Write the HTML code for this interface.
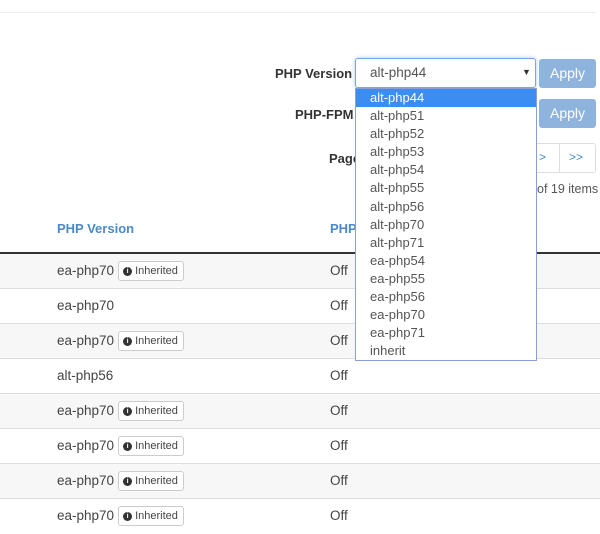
<!DOCTYPE html>
<html><head><meta charset="utf-8"><style>
*{margin:0;padding:0;box-sizing:border-box}
body{width:600px;height:531px;overflow:hidden;background:#fff;font-family:"Liberation Sans",sans-serif;color:#444;position:relative;font-size:13.5px}
.a{position:absolute;white-space:nowrap}
.lbl{font-weight:bold;font-size:13px;color:#333}
.btn{position:absolute;background:#8eb4de;color:#fff;border-radius:3px;font-size:14px;text-align:center;line-height:29px;width:57px;height:29px;left:539px}
.row{position:absolute;left:0;width:600px;height:35px;border-bottom:1px solid #ddd}
.sh{background:#f7f7f7}
.cell{position:absolute;top:0;left:57px;height:34px;display:flex;align-items:center;line-height:16px}
.off{position:absolute;top:9px;left:330px;line-height:16px}
.badge{display:inline-flex;align-items:center;border:1px solid #ccc;border-radius:3px;background:#fff;font-size:11px;height:20px;padding:0 5px 0 4px;margin-left:4px;color:#444}
.ic{display:inline-block;width:9px;height:9px;border-radius:50%;background:#333;color:#fff;font-size:7px;line-height:9px;text-align:center;font-weight:bold;margin-right:3px}
.dd{position:absolute;left:355px;top:88px;width:182px;height:273px;border:1px solid #8a9fd6;background:#fff}
.dd div{height:18.1px;line-height:18px;padding-left:14px;font-size:13px;color:#555}
.dd .hl{background:#3b8df1;color:#fff}
</style></head><body>
<div class="a" style="left:0;top:12px;width:596px;height:1px;background:#eee"></div>
<div class="a lbl" style="left:275px;top:66px">PHP Version</div>
<div class="a" style="left:355px;top:58px;width:181px;height:30px;border:1px solid #7aa7e0;border-radius:3px;box-shadow:0 0 4px #a8c8ef;background:#fff"><span class="a" style="left:14px;top:6px;color:#555;font-size:13.5px">alt-php44</span><span class="a" style="left:166px;top:8px;font-size:9px;color:#333">▼</span></div>
<div class="btn" style="top:59px">Apply</div>
<div class="a lbl" style="left:295px;top:107px">PHP-FPM</div>
<div class="btn" style="top:99px">Apply</div>
<div class="a lbl" style="left:329px;top:151px">Page</div>
<div class="a" style="left:520px;top:143px;width:76px;height:30px;border:1px solid #ddd;border-radius:3px"></div>
<div class="a" style="left:559px;top:143px;width:1px;height:30px;background:#ddd"></div>
<div class="a" style="left:539px;top:150px;color:#428bca;font-size:12px">&gt;</div>
<div class="a" style="left:569px;top:150px;color:#428bca;font-size:12px">&gt;&gt;</div>
<div class="a" style="left:537px;top:182px;font-size:12.5px;color:#555">of 19 items</div>
<div class="a" style="left:57px;top:221px;font-weight:bold;font-size:13px;color:#4a8acb">PHP Version</div>
<div class="a" style="left:330px;top:221px;font-weight:bold;font-size:13px;color:#4a8acb">PHP</div>
<div class="a" style="left:0;top:252px;width:600px;height:2px;background:#333"></div>
<div class="row sh" style="top:254px"><span class="cell">ea-php70<span class="badge"><span class="ic">i</span>Inherited</span></span><span class="off">Off</span></div>
<div class="row" style="top:289px"><span class="cell">ea-php70</span><span class="off">Off</span></div>
<div class="row sh" style="top:324px"><span class="cell">ea-php70<span class="badge"><span class="ic">i</span>Inherited</span></span><span class="off">Off</span></div>
<div class="row" style="top:359px"><span class="cell">alt-php56</span><span class="off">Off</span></div>
<div class="row sh" style="top:394px"><span class="cell">ea-php70<span class="badge"><span class="ic">i</span>Inherited</span></span><span class="off">Off</span></div>
<div class="row" style="top:429px"><span class="cell">ea-php70<span class="badge"><span class="ic">i</span>Inherited</span></span><span class="off">Off</span></div>
<div class="row sh" style="top:464px"><span class="cell">ea-php70<span class="badge"><span class="ic">i</span>Inherited</span></span><span class="off">Off</span></div>
<div class="row" style="top:499px;border:none"><span class="cell">ea-php70<span class="badge"><span class="ic">i</span>Inherited</span></span><span class="off">Off</span></div>
<div class="dd">
<div class="hl">alt-php44</div><div>alt-php51</div><div>alt-php52</div><div>alt-php53</div><div>alt-php54</div><div>alt-php55</div><div>alt-php56</div><div>alt-php70</div><div>alt-php71</div><div>ea-php54</div><div>ea-php55</div><div>ea-php56</div><div>ea-php70</div><div>ea-php71</div><div>inherit</div>
</div>
</body></html>
